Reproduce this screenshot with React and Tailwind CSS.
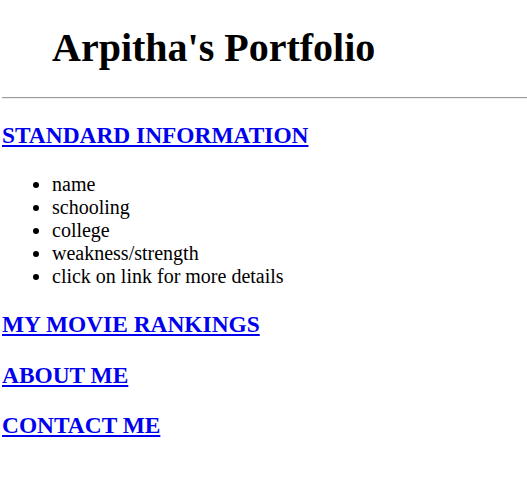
export default function App() {
  const items = ['name', 'schooling', 'college', 'weakness/strength', 'click on link for more details'];
  const links = ['MY MOVIE RANKINGS', 'ABOUT ME', 'CONTACT ME'];
  return (
    <div className="ml-[2px] font-['Liberation_Serif',serif] text-[20px] leading-[23px] text-black bg-white min-h-[498px]">
      <h1 className="pt-[25px] pl-[50px] text-[40px] leading-[46px] font-bold">Arpitha's Portfolio</h1>
      <div className="mt-[26px] h-[2px] border-t border-t-[#9a9a9a] border-b border-b-[#eeeeee]" />
      <h3 className="mt-[23px] text-[23.4px] leading-[27px] font-bold">
        <a href="#" className="text-[#0000ee] underline">STANDARD INFORMATION</a>
      </h3>
      <ul className="mt-[24px] pl-[50px] list-disc">
        {items.map(t => <li key={t}>{t}</li>)}
      </ul>
      {links.map((l, i) => (
        <h3 key={l} className={`${i === 0 ? 'mt-[23px]' : 'mt-[23.5px]'} text-[23.4px] leading-[27px] font-bold`}>
          <a href="#" className="text-[#0000ee] underline">{l}</a>
        </h3>
      ))}
    </div>
  );
}
